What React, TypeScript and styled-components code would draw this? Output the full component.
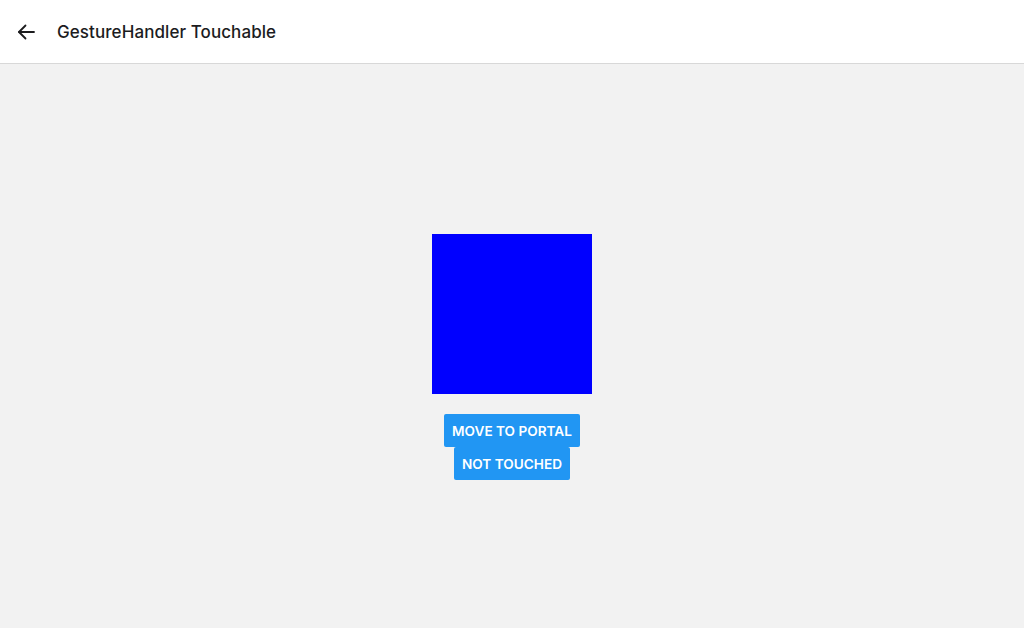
import React from 'react'
import styled, { createGlobalStyle } from 'styled-components'

const GlobalStyle = createGlobalStyle`
    html, body {
        margin: 0;
        padding: 0;
        background: #ffffff;
        font-family: Inter, 'Noto Sans', sans-serif;
    }
`

const Screen = styled.div`
    display: flex;
    flex-direction: column;
    width: 100vw;
    height: 628px;
    overflow: hidden;
`

const Header = styled.header`
    display: flex;
    align-items: center;
    height: 63px;
    padding: 0 16px;
    background: #ffffff;
    border-bottom: 1px solid #d8d8d8;
    flex-shrink: 0;
`

const BackButton = styled.button`
    display: flex;
    align-items: center;
    justify-content: center;
    width: 20px;
    height: 20px;
    padding: 0;
    margin-right: 21px;
    border: none;
    background: transparent;
    color: #1c1c1e;
`

const Title = styled.h1`
    margin: 0;
    font-size: 17px;
    font-weight: 500;
    letter-spacing: 0.08px;
    color: #1c1c1e;
`

const Content = styled.main`
    display: flex;
    flex-direction: column;
    align-items: center;
    padding-top: 170px;
    flex: 1;
    background: #f2f2f2;
`

const Square = styled.div`
    width: 160px;
    height: 160px;
    background: #0000ff;
    margin-bottom: 20px;
`

const ActionButton = styled.button`
    height: 33px;
    padding: 0 8px;
    border: none;
    border-radius: 2px;
    background: #2196f3;
    color: #ffffff;
    font-family: Inter, 'Noto Sans', sans-serif;
    font-size: 13.6px;
    font-weight: 600;
    text-transform: uppercase;
`

const App: React.FC = () => {
    return (
        <Screen>
            <GlobalStyle />
            <Header>
                <BackButton aria-label="back">
                    <svg width="20" height="20" viewBox="0 0 20 20" fill="none" stroke="currentColor" strokeWidth="1.8" strokeLinecap="round" strokeLinejoin="round">
                        <path d="M18 10H3" />
                        <path d="M9.5 3.5L3 10l6.5 6.5" />
                    </svg>
                </BackButton>
                <Title>GestureHandler Touchable</Title>
            </Header>
            <Content>
                <Square />
                <ActionButton>Move to portal</ActionButton>
                <ActionButton>Not touched</ActionButton>
            </Content>
        </Screen>
    )
}

export default App
